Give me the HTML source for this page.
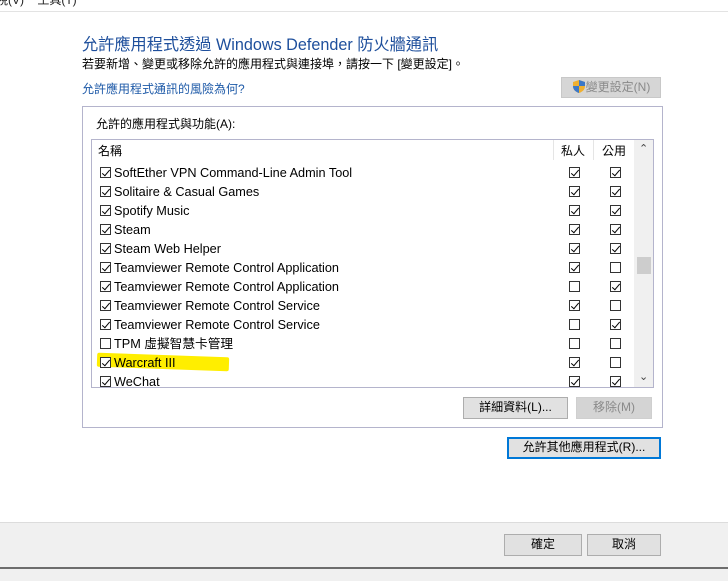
<!DOCTYPE html>
<html><head><meta charset="utf-8"><style>
*{margin:0;padding:0;box-sizing:border-box}
body{width:728px;height:581px;background:#fff;position:relative;overflow:hidden;font-family:"Segoe UI","Liberation Sans","Noto Sans CJK TC",sans-serif;font-size:12px;color:#000}
.a{position:absolute;white-space:nowrap}
.btn{position:absolute;background:#e1e1e1;border:1px solid #adadad;text-align:center;font-size:12px;line-height:19px}
.cb{position:absolute;width:11px;height:11px;border:1px solid #333;background:#fff}
.cb.c::after{content:"";position:absolute;left:3px;top:0px;width:3px;height:7px;border:solid #000;border-width:0 1.6px 1.6px 0;transform:rotate(40deg)}
</style></head><body>
<div class="a" style="left:-4px;top:-9px;font-size:12px;color:#222">視(V)&nbsp;&nbsp;&nbsp;&nbsp;工具(T)</div>
<div class="a" style="left:0;top:11px;width:728px;height:1px;background:#e3e3e3"></div>
<div class="a" style="left:82px;top:31px;font-size:16.2px;color:#1e4f9c">允許應用程式透過 Windows Defender 防火牆通訊</div>
<div class="a" style="left:82px;top:55px;font-size:12px">若要新增、變更或移除允許的應用程式與連接埠，請按一下 [變更設定]。</div>
<div class="a" style="left:82px;top:80px;font-size:12px;color:#1e5aa8">允許應用程式通訊的風險為何?</div>
<div class="btn" style="left:561px;top:77px;width:100px;height:21px;color:#8a8a8a;background:#d6d6d6;border-color:#c8c8c8">
<svg width="14" height="15" viewBox="0 0 14 15" style="vertical-align:-3px"><path d="M7 1 L13 3 V7 C13 11 10 13 7 14 C4 13 1 11 1 7 V3Z" fill="#f0b030"/><path d="M7 1 L13 3 V7 H7Z M7 7 V14 C4 13 1 11 1 7Z" fill="#3b78c8"/></svg>變更設定(N)</div>
<div class="a" style="left:82px;top:106px;width:581px;height:322px;border:1px solid #b4b4cc"></div>
<div class="a" style="left:96px;top:115px">允許的應用程式與功能(A):</div>
<div class="a" style="left:91px;top:139px;width:563px;height:249px;border:1px solid #b4b4cc;overflow:hidden">
 <div class="a" style="left:6px;top:2px">名稱</div>
 <div class="a" style="left:461px;top:0;width:1px;height:20px;background:#e5e5e5"></div>
 <div class="a" style="left:469px;top:2px">私人</div>
 <div class="a" style="left:501px;top:0;width:1px;height:20px;background:#e5e5e5"></div>
 <div class="a" style="left:510px;top:2px">公用</div>
 <div class="a" style="left:542px;top:0;width:19px;height:249px;background:#f0f0f0"></div>
 <div class="a" style="left:547px;top:2px;font-size:11px;color:#444">&#8963;</div>
 <div class="a" style="left:547px;top:230px;font-size:11px;color:#444">&#8964;</div>
 <div class="a" style="left:545px;top:117px;width:14px;height:17px;background:#cdcdcd"></div>
 <div class="a" style="left:5px;top:215px;width:132px;height:14px;background:#ffee00;transform:rotate(2deg);border-radius:2px"></div>
 <div id="rows"></div>
</div>
<div class="btn" style="left:463px;top:397px;width:105px;height:22px">詳細資料(L)...</div>
<div class="btn" style="left:576px;top:397px;width:76px;height:22px;color:#8a8a8a;background:#d4d4d4;border-color:#cfcfcf">移除(M)</div>
<div class="btn" style="left:507px;top:437px;width:154px;height:22px;border:2px solid #0078d7;line-height:17px">允許其他應用程式(R)...</div>
<div class="a" style="left:0;top:522px;width:728px;height:1px;background:#dcdcdc"></div>
<div class="a" style="left:0;top:523px;width:728px;height:44px;background:#f0f0f0"></div>
<div class="a" style="left:0;top:567px;width:728px;height:2px;background:#6d6d6d"></div>
<div class="a" style="left:0;top:569px;width:728px;height:12px;background:#f0f0f0"></div>
<div class="btn" style="left:504px;top:534px;width:78px;height:22px">確定</div>
<div class="btn" style="left:587px;top:534px;width:74px;height:22px">取消</div>
<script>
var d=[["SoftEther VPN Command-Line Admin Tool",1,1,1],["Solitaire &amp; Casual Games",1,1,1],["Spotify Music",1,1,1],["Steam",1,1,1],["Steam Web Helper",1,1,1],["Teamviewer Remote Control Application",1,1,0],["Teamviewer Remote Control Application",1,0,1],["Teamviewer Remote Control Service",1,1,0],["Teamviewer Remote Control Service",1,0,1],["TPM 虛擬智慧卡管理",0,0,0],["Warcraft III",1,1,0],["WeChat",1,1,1]];
var h="";d.forEach(function(r,i){var t=23+i*19;
h+='<div class="cb'+(r[1]?' c':'')+'" style="left:8px;top:'+(t+4)+'px"></div><div class="a" style="left:22px;top:'+(t+1)+'px;font-size:12.7px;line-height:19px">'+r[0]+'</div>';
h+='<div class="cb'+(r[2]?' c':'')+'" style="left:477px;top:'+(t+4)+'px"></div><div class="cb'+(r[3]?' c':'')+'" style="left:518px;top:'+(t+4)+'px"></div>';});
document.getElementById("rows").innerHTML=h;
</script>
</body></html>
